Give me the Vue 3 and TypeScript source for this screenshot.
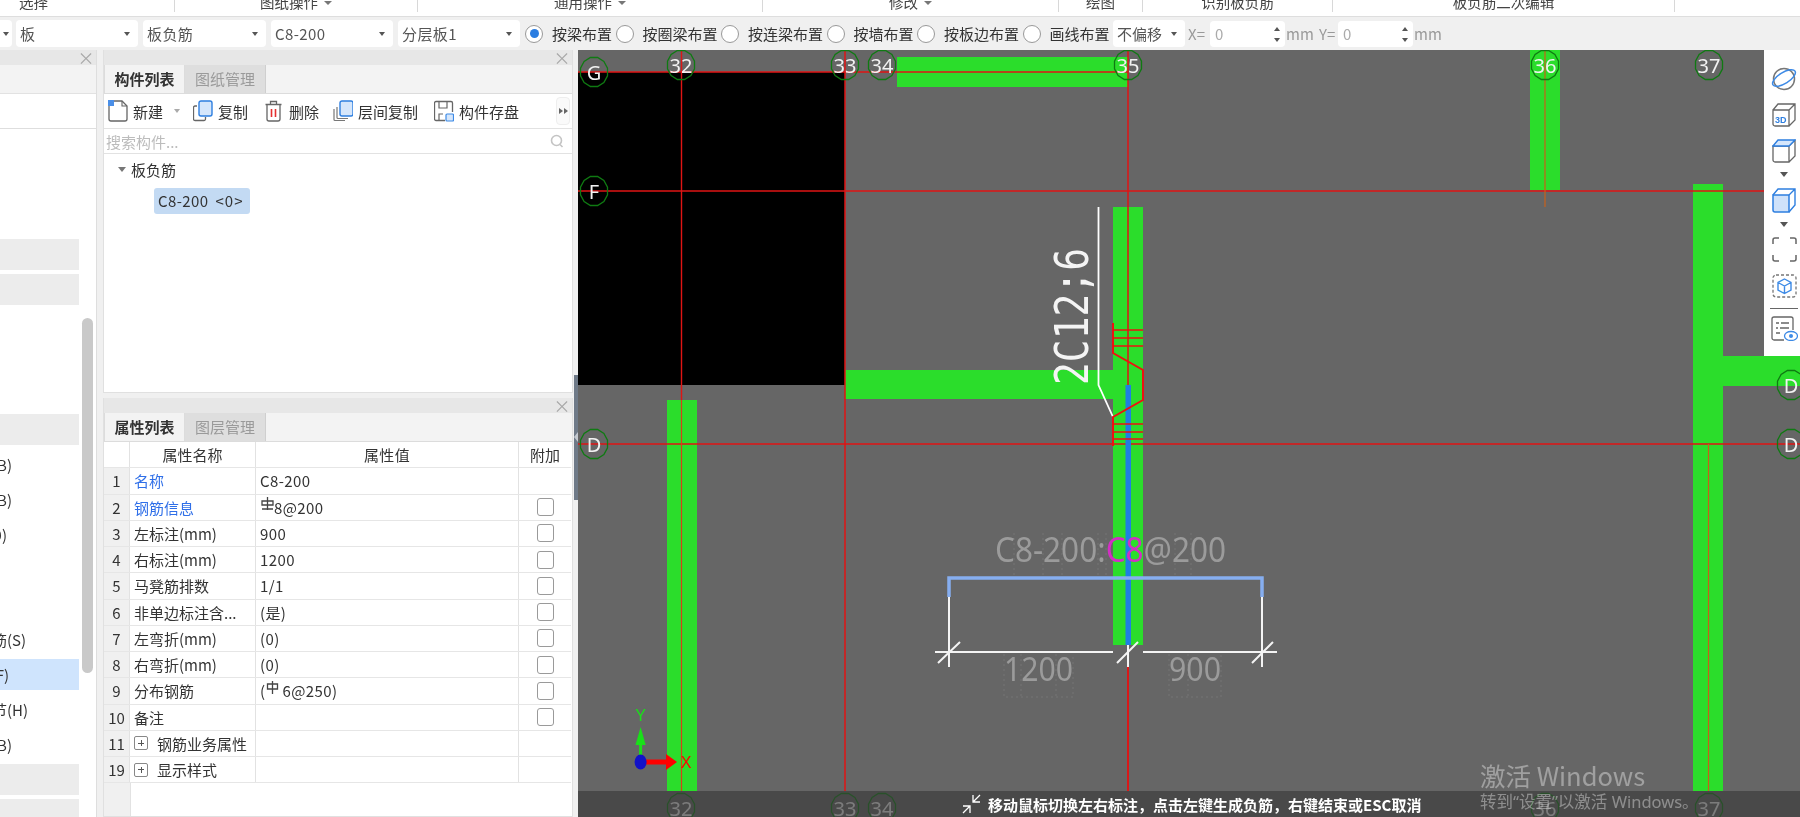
<template>
  <div class="app">
    <div class="ribbon">
      <div v-for="g in ribbonGroups" :key="g.label" class="rib-group" :class="{ first: g.first }" :style="{ width: g.w + 'px' }">
        <span>{{ g.label }}</span><i v-if="g.arrow" class="rib-arrow"></i>
      </div>
    </div>

    <div class="opts">
      <div v-for="c in combos" :key="c.w + c.text" class="combo" :style="{ width: c.w + 'px' }">
        <span>{{ c.text }}</span><i class="caret"></i>
      </div>
      <div v-for="(r, i) in radios" :key="r" class="radio-item">
        <span class="radio" :class="{ on: i === 0 }"></span>
        <span>{{ r }}</span>
      </div>
      <div class="combo offset"><span>不偏移</span><i class="caret"></i></div>
      <span class="dim xlabel">X=</span>
      <div class="spin"><span>0</span><i class="up"></i><i class="down"></i></div>
      <span class="dim mm">mm</span>
      <span class="dim ylabel">Y=</span>
      <div class="spin"><span>0</span><i class="up"></i><i class="down"></i></div>
      <span class="dim mm">mm</span>
    </div>

    <div class="main">
      <aside class="left">
        <div class="pane-head"><span class="close">×</span></div>
        <div class="left-strip"></div>
        <div class="left-tools"></div>
        <div class="left-list">
          <div v-for="(row, i) in leftRows" :key="i" class="left-row" :class="row.kind">
            <span v-if="row.text" class="clip" :style="{ width: row.end + 'px' }">{{ row.text }}</span>
          </div>
        </div>
        <div class="scrollbar"></div>
      </aside>

      <section class="mid">
        <div class="panel top-panel">
          <div class="pane-head"><span class="close">×</span></div>
          <div class="tabs">
            <span class="tab active">构件列表</span>
            <span class="tab">图纸管理</span>
          </div>
          <div class="tools">
            <span class="tool first-tool">
              <svg width="20" height="22" viewBox="0 0 20 22" fill="none">
                <path d="M1 5v14a2 2 0 0 0 2 2h14a2 2 0 0 0 2-2V6l-5-5H6" stroke="#666" stroke-width="1.3" />
                <path d="M14 1v5h5" stroke="#666" stroke-width="1.1" />
                <rect x="0" y="0" width="6" height="6" fill="#4a8fe8" />
              </svg>
              新建<i class="caret tool-caret"></i>
            </span>
            <span class="tool copy-tool">
              <svg width="20" height="22" viewBox="0 0 20 22" fill="none">
                <path d="M4 6H2a1.5 1.5 0 0 0-1.5 1.5V19A1.5 1.5 0 0 0 2 20.5h9a1.5 1.5 0 0 0 1.500-1.5v-2" stroke="#666" stroke-width="1.3" />
                <rect x="6" y="1" width="13" height="15" rx="2" fill="#d5e6fb" stroke="#2e7fe0" stroke-width="1.4" />
              </svg>
              复制
            </span>
            <span class="tool del-tool">
              <svg width="17" height="22" viewBox="0 0 17 22" fill="none">
                <path d="M2 5v14a2 2 0 0 0 2 2h9a2 2 0 0 0 2-2V5M0.5 4.5h16M5.5 4V1.5h6V4" stroke="#666" stroke-width="1.3" />
                <path d="M6.5 9v8M10.5 9v8" stroke="#e53030" stroke-width="1.6" />
              </svg>
              删除
            </span>
            <span class="tool layer-tool">
              <svg width="20" height="22" viewBox="0 0 20 22" fill="none">
                <path d="M1 9v10.5a1 1 0 0 0 1 1h10M4 7v10.5a1 1 0 0 0 1 1h10" stroke="#777" stroke-width="1.2" />
                <rect x="7" y="1" width="13" height="15" rx="2" fill="#d5e6fb" stroke="#2e7fe0" stroke-width="1.4" />
              </svg>
              层间复制
            </span>
            <span class="tool save-tool">
              <svg width="20" height="22" viewBox="0 0 20 22" fill="none">
                <path d="M11 20.5H2A1.5 1.5 0 0 1 .5 19V3A1.5 1.5 0 0 1 2 1.5h15A1.5 1.5 0 0 1 18.500 3v9" stroke="#666" stroke-width="1.3" />
                <path d="M5 2v6h8V2M5 20v-6h4" stroke="#666" stroke-width="1.2" />
                <rect x="12" y="14" width="7.5" height="7" rx="1" fill="#d5e6fb" stroke="#3d8ae6" stroke-width="1.2" />
              </svg>
              构件存盘
            </span>
            <span class="more">
              <i></i><i></i>
            </span>
          </div>
          <div class="search">
            <span>搜索构件...</span>
            <svg width="14" height="14" viewBox="0 0 14 14" fill="none">
              <circle cx="6.5" cy="6.5" r="5" stroke="#c4c4c4" stroke-width="1.6" />
              <path d="M10 10.5l2.5 2.5" stroke="#c4c4c4" stroke-width="1.6" />
            </svg>
          </div>
          <div class="tree">
            <div class="tree-root"><i class="caret"></i>板负筋</div>
            <div class="chip">C8-200<span>&lt;0&gt;</span></div>
          </div>
        </div>

        <div class="panel bottom-panel">
          <div class="pane-head"><span class="close">×</span></div>
          <div class="tabs">
            <span class="tab active">属性列表</span>
            <span class="tab">图层管理</span>
          </div>
          <div class="table">
            <div class="tr head">
              <span class="td idx blank"></span>
              <span class="td name center">属性名称</span>
              <span class="td val center">属性值</span>
              <span class="td add center">附加</span>
            </div>
            <div v-for="p in props" :key="p.no" class="tr">
              <span class="td idx">{{ p.no }}</span>
              <span class="td name" :class="{ link: p.link }">
                <i v-if="p.group" class="plus"></i>{{ p.name }}
              </span>
              <span class="td val">
                <template v-if="p.sym === 'c'">
                  <svg class="sym" width="13" height="14" viewBox="0 0 13 14" fill="none">
                    <path d="M1 4h11v4H1zM6.5 0v13M1 12h11" stroke="#444" stroke-width="1.3" />
                  </svg>8@200
                </template>
                <template v-else-if="p.sym === 'a'">
                  (<svg class="sym wide" width="13" height="14" viewBox="0 0 13 14" fill="none">
                    <path d="M1.5 3h10v5h-10zM6.5 0v13" stroke="#444" stroke-width="1.3" />
                  </svg>6@250)
                </template>
                <template v-else>{{ p.val }}</template>
              </span>
              <span class="td add center"><i v-if="p.check" class="check"></i></span>
            </div>
            <div class="table-rest"></div>
          </div>
        </div>
      </section>

      <div class="splitter"><i></i></div>

      <section class="canvas">
        <svg class="cad" width="1222" height="767" viewBox="578 50 1222 767">
          <rect x="578" y="72" width="267" height="313" fill="#000" />
          <rect v-for="(b, i) in greens" :key="i" :x="b[0]" :y="b[1]" :width="b[2]" :height="b[3]" fill="#2bdd2b" />

          <path d="M578 72H1128M578 191H1800M578 444H1800M845 50V791M1128 50V791" stroke="#e01414" stroke-width="1.5" fill="none" />
          <path d="M681.5 50V400" stroke="#e01414" stroke-width="1.4" />
          <path d="M681.5 400V791" stroke="#d8401a" stroke-width="1.2" />
          <path d="M1545 50V207" stroke="#c8601a" stroke-width="1.2" />
          <path d="M1708.5 444V791" stroke="#c8601a" stroke-width="1.2" />

          <g v-for="n in bubbles" :key="n.label + n.x + n.y" :opacity="n.y > 800 ? 0.5 : 1">
            <polygon :points="bubblePoints(n.x, n.y)" fill="none" stroke="#0f7a12" stroke-width="1.3" />
            <text :x="n.x" :y="n.y + 7.5" class="bubble-text" text-anchor="middle">{{ n.label }}</text>
          </g>

          <path d="M1098.5 207V385L1113 417" stroke="#fff" stroke-width="1.8" fill="none" />
          <text transform="translate(1088 385) rotate(-90)" class="leader" textLength="137" lengthAdjust="spacingAndGlyphs">2C12;6</text>

          <rect x="1125.5" y="385" width="5.5" height="260" fill="#1f7fe2" />
          <path d="M1113 323V353L1143 370V400L1113 417V446" stroke="#ee1111" stroke-width="2" fill="none" />
          <path d="M1113 330H1143M1113 338H1143M1113 346H1143M1113 424H1143M1113 432H1143M1113 439H1143" stroke="#ee1111" stroke-width="1.6" />

          <path d="M949 597V667M1262 597V667M935 652H1113M1143 652H1277M938 663L960 642M1117 663L1138 642M1252 663L1273 642M1128 645V667" stroke="#f4f4f4" stroke-width="2" fill="none" />
          <path d="M949 597V578H1262V597" stroke="#86aef0" stroke-width="3.5" fill="none" />
          <path d="M1128 667V791" stroke="#e01414" stroke-width="1.5" />

          <path d="M1014 533V577M1043 533V577M1062 533V577M1098 533V577M1106 533V577M1175 533V577M1191 533V577M1004 654V697H1073V654M1021 654V697M1056 654V697M1169 654V697H1221V654M1188 654V697" stroke="#7c7c7c" stroke-width="0.7" stroke-dasharray="2 3" fill="none" />

          <text x="995" y="562" class="tag" textLength="231" lengthAdjust="spacingAndGlyphs">C8-200:<tspan fill="#d22fc4">C8</tspan>@200</text>
          <text x="1004" y="681" class="dim-text" textLength="69" lengthAdjust="spacingAndGlyphs">1200</text>
          <text x="1169" y="681" class="dim-text" textLength="52" lengthAdjust="spacingAndGlyphs">900</text>

          <path d="M640.6 762V742" stroke="#19e019" stroke-width="3" />
          <path d="M640.6 727L635.5 745H645.7Z" fill="#19e019" />
          <text x="640.6" y="721" class="axis" fill="#19e019" text-anchor="middle">Y</text>
          <path d="M645 762H668" stroke="#f00" stroke-width="5" />
          <path d="M666 754L677 762L666 770Z" fill="#f00" />
          <text x="686" y="768" class="axis" fill="#f00" text-anchor="middle">X</text>
          <ellipse cx="640.6" cy="762" rx="6" ry="7.5" fill="#1212c8" />
        </svg>

        <div class="view-tools">
          <svg class="vt" width="26" height="24" viewBox="0 0 26 24" fill="none">
            <circle cx="13" cy="12" r="10.5" stroke="#777" stroke-width="1.5" />
            <ellipse cx="13" cy="11" rx="13" ry="5.5" transform="rotate(-32 13 11)" stroke="#3d8ae6" stroke-width="1.5" />
          </svg>
          <svg class="vt" width="24" height="24" viewBox="0 0 24 24" fill="none">
            <path d="M1 7h16v16H3a2 2 0 0 1-2-2zM1 7l5-6h17v16l-6 6M17 7l6-6" stroke="#666" stroke-width="1.3" />
            <text x="3" y="20" class="three-d">3D</text>
          </svg>
          <svg class="vt" width="24" height="24" viewBox="0 0 24 24" fill="none">
            <path d="M1 7h16v16H3a2 2 0 0 1-2-2zM17 23l6-6V1M17 7l6-6" stroke="#666" stroke-width="1.3" />
            <path d="M1 7l5-6h17l-6 6z" fill="#d5e6fb" stroke="#2e7fe0" stroke-width="1.4" />
          </svg>
          <i class="vt-arrow"></i>
          <svg class="vt" width="24" height="25" viewBox="0 0 24 25" fill="none">
            <path d="M1 7h16v17H3a2 2 0 0 1-2-2z" fill="#cfe2fa" stroke="#2e7fe0" stroke-width="1.5" />
            <path d="M1 7l5-6h17v16l-6 7M17 7l6-6" stroke="#2e7fe0" stroke-width="1.4" />
          </svg>
          <i class="vt-arrow"></i>
          <svg class="vt" width="25" height="25" viewBox="0 0 25 25" fill="none">
            <path d="M1 7V3a2 2 0 0 1 2-2h4M18 1h4a2 2 0 0 1 2 2v4M24 18v4a2 2 0 0 1-2 2h-4M7 24H3a2 2 0 0 1-2-2v-4" stroke="#666" stroke-width="1.5" />
          </svg>
          <svg class="vt" width="25" height="24" viewBox="0 0 25 24" fill="none">
            <rect x="1" y="1" width="23" height="22" rx="3" stroke="#777" stroke-width="1.3" stroke-dasharray="3 2" />
            <path d="M12.5 5l6.5 3.5v7.5l-6.5 3.5L6 16V8.5zM6 8.5l6.5 3.5 6.5-3.5M12.5 12v7.5" stroke="#3d8ae6" stroke-width="1.4" />
          </svg>
          <i class="vt-line"></i>
          <svg class="vt last" width="27" height="25" viewBox="0 0 27 25" fill="none">
            <path d="M13 24H3a2 2 0 0 1-2-2V3a2 2 0 0 1 2-2h17a2 2 0 0 1 2 2v11" stroke="#666" stroke-width="1.3" />
            <path d="M5 7h3M10 7h8M5 12h2M9 12h9M5 17h4" stroke="#666" stroke-width="1.3" />
            <ellipse cx="20" cy="20" rx="6.5" ry="4.5" stroke="#3d8ae6" stroke-width="1.3" />
            <circle cx="20" cy="20" r="2" fill="#3d8ae6" />
          </svg>
        </div>

        <div class="hint">
          <svg width="20" height="20" viewBox="0 0 20 20" fill="none">
            <path d="M11 1v7h7M11 8l7-7M1 12h7v7M8 12l-7 7" stroke="#fff" stroke-width="1.3" />
          </svg>
          <span>移动鼠标切换左右标注，点击左键生成负筋，右键结束或ESC取消</span>
        </div>

        <div class="watermark">
          <div class="wm-big">激活 Windows</div>
          <div class="wm-small">转到“设置”以激活 Windows。</div>
        </div>
      </section>
    </div>
  </div>
</template>

<script setup lang="ts">
interface Prop {
  no: number
  name: string
  val?: string
  sym?: 'c' | 'a'
  link?: boolean
  check?: boolean
  group?: boolean
}

const ribbonGroups = [
  { label: '选择', w: 175, first: true, arrow: false },
  { label: '图纸操作', w: 243, arrow: true },
  { label: '通用操作', w: 345, arrow: true },
  { label: '修改', w: 296, arrow: true },
  { label: '绘图', w: 84, arrow: false },
  { label: '识别板负筋', w: 190, arrow: false },
  { label: '板负筋二次编辑', w: 342, arrow: false }
]

const combos = [
  { text: '', w: 12 },
  { text: '板', w: 122 },
  { text: '板负筋', w: 123 },
  { text: 'C8-200', w: 122 },
  { text: '分层板1', w: 122 }
]

const radios = ['按梁布置', '按圈梁布置', '按连梁布置', '按墙布置', '按板边布置', '画线布置']

const leftRows = [
  { kind: 'gray' }, { kind: 'gray' }, { kind: '' }, { kind: '' }, { kind: '' }, { kind: 'gray' },
  { kind: '', text: '筋(B)', end: 12 },
  { kind: '', text: '筋(B)', end: 12 },
  { kind: '', text: '(9)', end: 7 },
  { kind: '' }, { kind: '' },
  { kind: '', text: '板筋(S)', end: 26 },
  { kind: 'sel', text: '(F)', end: 9 },
  { kind: '', text: '筋节(H)', end: 28 },
  { kind: '', text: '筋(B)', end: 12 },
  { kind: 'gray' }, { kind: 'gray' }
]

const props: Prop[] = [
  { no: 1, name: '名称', val: 'C8-200', link: true },
  { no: 2, name: '钢筋信息', sym: 'c', link: true, check: true },
  { no: 3, name: '左标注(mm)', val: '900', check: true },
  { no: 4, name: '右标注(mm)', val: '1200', check: true },
  { no: 5, name: '马凳筋排数', val: '1/1', check: true },
  { no: 6, name: '非单边标注含...', val: '(是)', check: true },
  { no: 7, name: '左弯折(mm)', val: '(0)', check: true },
  { no: 8, name: '右弯折(mm)', val: '(0)', check: true },
  { no: 9, name: '分布钢筋', sym: 'a', check: true },
  { no: 10, name: '备注', val: '', check: true },
  { no: 11, name: '钢筋业务属性', group: true },
  { no: 19, name: '显示样式', group: true }
]

// x, y, width, height in page coordinates
const greens = [
  [897, 57, 231, 30],
  [1530, 50, 30, 140],
  [845, 370, 268, 29],
  [1113, 207, 30, 438],
  [667, 400, 30, 391],
  [1693, 184, 30, 607],
  [1723, 356, 77, 30]
]

const bubbles = [
  { label: 'G', x: 594, y: 72 },
  { label: 'F', x: 594, y: 191 },
  { label: 'D', x: 594, y: 444 },
  { label: '32', x: 681, y: 65 },
  { label: '33', x: 845, y: 65 },
  { label: '34', x: 882, y: 65 },
  { label: '35', x: 1128, y: 65 },
  { label: '36', x: 1545, y: 65 },
  { label: '37', x: 1709, y: 65 },
  { label: 'D', x: 1791, y: 385 },
  { label: 'D', x: 1791, y: 444 },
  { label: '32', x: 681, y: 808 },
  { label: '33', x: 845, y: 808 },
  { label: '34', x: 882, y: 808 },
  { label: '36', x: 1545, y: 808 },
  { label: '37', x: 1709, y: 808 }
]

function bubblePoints(cx: number, cy: number): string {
  const pts: string[] = []
  for (let i = 0; i < 12; i++) {
    const a = (Math.PI / 6) * i + Math.PI / 12
    pts.push(`${(cx + 14 * Math.cos(a)).toFixed(1)},${(cy + 15 * Math.sin(a)).toFixed(1)}`)
  }
  return pts.join(' ')
}
</script>

<style>
html, body {
  margin: 0;
  overflow: hidden;
}
</style>

<style scoped>
.app {
  width: 1800px;
  height: 817px;
  display: flex;
  flex-direction: column;
  overflow: hidden;
  background: #f0f0f0;
  color: #333;
  font-family: "Noto Sans CJK SC", "Noto Sans", sans-serif;
  font-size: 15px;
  filter: blur(0.3px);
}
i { display: block; font-style: normal; }

.ribbon {
  height: 17px;
  flex: none;
  display: flex;
  background: #fff;
  border-bottom: 1px solid #dedede;
  box-sizing: border-box;
  overflow: hidden;
}
.rib-group {
  height: 12px;
  flex: none;
  box-sizing: border-box;
  border-right: 1px solid #d8d8d8;
  display: flex;
  justify-content: center;
  align-items: center;
  gap: 6px;
  line-height: 16px;
  font-size: 14.5px;
  color: #444;
}
.rib-group span { position: relative; top: -4px; }
.rib-group.first { justify-content: flex-start; padding-left: 19px; }
.rib-arrow {
  width: 0;
  height: 0;
  border: 4px solid transparent;
  border-top: 4px solid #777;
  margin-top: -2px;
}

.opts {
  height: 33px;
  flex: none;
  display: flex;
  align-items: center;
}
.combo {
  height: 27px;
  margin-right: 5px;
  box-sizing: border-box;
  background: #fff;
  border-radius: 4px;
  display: flex;
  align-items: center;
  justify-content: space-between;
  padding: 0 8px 0 4px;
  flex: none;
  color: #555;
  letter-spacing: 0.4px;
}
.combo:first-child { padding: 0; margin-right: 4px; border-radius: 0 4px 4px 0; justify-content: center; }
.combo.offset { width: 72px; margin: 0 3px 0 0; letter-spacing: 0; }
.caret {
  width: 0;
  height: 0;
  border: 3.5px solid transparent;
  border-top: 4px solid #555;
  border-bottom: 0;
}
.radio-item {
  display: flex;
  align-items: center;
  margin-right: 3.5px;
  white-space: nowrap;
}
.radio {
  width: 18px;
  height: 18px;
  box-sizing: border-box;
  border: 1px solid #999;
  border-radius: 50%;
  margin-right: 9px;
  background: #fff;
  display: flex;
  align-items: center;
  justify-content: center;
}
.radio.on::after {
  content: "";
  width: 9px;
  height: 9px;
  border-radius: 50%;
  background: #2a7de1;
}
.dim { color: #999; }
.xlabel { width: 22px; }
.ylabel { width: 19px; margin-left: 6px; }
.mm { margin-left: 1px; width: 27px; }
.spin {
  position: relative;
  width: 75px;
  height: 26px;
  box-sizing: border-box;
  background: #fff;
  border-radius: 4px;
  padding-left: 5px;
  line-height: 26px;
  color: #aaa;
}
.spin .up, .spin .down {
  position: absolute;
  right: 5px;
  width: 0;
  height: 0;
  border: 3.5px solid transparent;
}
.spin .up { top: 6px; border-bottom: 4px solid #555; border-top: 0; }
.spin .down { bottom: 5px; border-top: 4px solid #555; border-bottom: 0; }

.main {
  flex: 1;
  display: flex;
  min-height: 0;
}
.left {
  position: relative;
  width: 97px;
  flex: none;
  display: flex;
  flex-direction: column;
  background: #fff;
  border-right: 1px solid #dedede;
  box-sizing: border-box;
  margin-right: 6px;
}
.pane-head {
  height: 15px;
  flex: none;
  background: #e7e7e7;
  display: flex;
  justify-content: flex-end;
  align-items: center;
}
.close {
  width: 20px;
  text-align: center;
  color: #a8a8a8;
  font-size: 17px;
  line-height: 15px;
}
.left-strip {
  height: 28px;
  flex: none;
  background: #f3f3f3;
  border-bottom: 1px solid #e2e2e2;
}
.left-tools {
  height: 34px;
  flex: none;
  border-bottom: 1px solid #dedede;
}
.left-list {
  padding-top: 110px;
  width: 79px;
  display: flex;
  flex-direction: column;
  gap: 4px;
}
.left-row {
  height: 31px;
  flex: none;
  display: flex;
  align-items: center;
  overflow: hidden;
}
.left-row.gray { background: #ececec; }
.left-row.sel { background: #cfe4fd; }
.clip {
  display: flex;
  justify-content: flex-end;
  white-space: nowrap;
  overflow: hidden;
}
.scrollbar {
  position: absolute;
  left: 82px;
  top: 268px;
  width: 11px;
  height: 355px;
  background: #c9c9c9;
  border-radius: 6px;
}

.mid {
  width: 470px;
  flex: none;
  display: flex;
  flex-direction: column;
  gap: 5px;
}
.panel {
  display: flex;
  flex-direction: column;
  background: #fff;
  box-sizing: border-box;
  border: 1px solid #e0e0e0;
  border-top: 0;
}
.top-panel { height: 343px; }
.bottom-panel { height: 419px; }
.tabs {
  height: 28px;
  flex: none;
  display: flex;
  background: #f3f3f3;
  border-bottom: 1px solid #dcdcdc;
}
.tab {
  width: 81px;
  box-sizing: border-box;
  text-align: center;
  line-height: 28px;
  background: #dedede;
  color: #9a9a9a;
  border-right: 1px solid #cfcfcf;
}
.tab.active {
  background: #f3f3f3;
  color: #333;
  font-weight: 700;
  border-left: 1px solid #dcdcdc;
  border-right: 1px solid #dcdcdc;
}
.tools {
  height: 34px;
  flex: none;
  display: flex;
  align-items: center;
  border-bottom: 1px solid #e2e2e2;
  padding-left: 4px;
}
.tool {
  display: flex;
  align-items: center;
  gap: 5px;
  white-space: nowrap;
}
.copy-tool { margin-left: 13px; }
.del-tool { margin-left: 17px; gap: 7px; }
.layer-tool { margin-left: 14px; }
.save-tool { margin-left: 16px; }
.tool-caret { margin-left: 6px; border-top-color: #aaa; }
.more {
  margin-left: auto;
  margin-right: 2px;
  width: 12px;
  height: 26px;
  border-radius: 4px;
  background: #fafafa;
  border: 1px solid #eee;
  display: flex;
  align-items: center;
  justify-content: center;
  gap: 1px;
}
.more i {
  width: 0;
  height: 0;
  border: 3px solid transparent;
  border-left: 4px solid #666;
  border-right: 0;
}
.search {
  height: 24px;
  flex: none;
  display: flex;
  align-items: center;
  justify-content: space-between;
  padding: 0 8px 0 2px;
  color: #bcbcbc;
  border-bottom: 1px solid #e2e2e2;
}
.tree { padding: 5px 0 0 14px; flex: 1; }
.tree-root {
  display: flex;
  align-items: center;
  gap: 5px;
  height: 20px;
}
.tree-root .caret { border-top-color: #777; border-left-width: 4px; border-right-width: 4px; border-top-width: 5px; }
.chip {
  margin: 9px 0 0 36px;
  width: 96px;
  height: 26px;
  box-sizing: border-box;
  padding-left: 4px;
  line-height: 26px;
  background: #c3daf3;
  border-radius: 3px;
  white-space: pre;
  letter-spacing: 0.4px;
  display: flex;
}
.chip span { margin-left: 7px; letter-spacing: 1px; }

.table {
  flex: 1;
  display: flex;
  flex-direction: column;
  min-height: 0;
}
.tr {
  height: 26.25px;
  flex: none;
  display: flex;
  width: 467px;
  box-sizing: border-box;
  border-bottom: 1.5px solid #e6e6e6;
}
.td {
  box-sizing: border-box;
  border-right: 1px solid #e2e2e2;
  display: flex;
  align-items: center;
  white-space: nowrap;
  padding-left: 4px;
}
.td.center { justify-content: center; padding-left: 0; }
.idx {
  width: 26px;
  flex: none;
  padding-left: 0;
  justify-content: center;
  background: #f0f0f0;
}
.idx.blank { background: #fff; }
.name { width: 126px; flex: none; }
.name.link { color: #2f6fe8; }
.val { flex: 1; padding-left: 4px; letter-spacing: 0.4px; }
.add { width: 52px; flex: none; border-right: 0; }
.sym { margin: -6px 0 0 1px; }
.sym.wide { margin-right: 3px; }
.check {
  width: 17px;
  height: 18px;
  box-sizing: border-box;
  border: 1.5px solid #9a9a9a;
  border-radius: 3px;
  background: #fff;
}
.plus {
  position: relative;
  width: 14px;
  height: 14px;
  margin-right: 9px;
  box-sizing: border-box;
  border: 1px solid #888;
  border-radius: 2px;
}
.plus::before, .plus::after {
  content: "";
  position: absolute;
  background: #555;
}
.plus::before { left: 3px; right: 3px; top: 5.5px; height: 1px; }
.plus::after { top: 3px; bottom: 3px; left: 5.5px; width: 1px; }
.table-rest {
  flex: 1;
  width: 26px;
  background: #f0f0f0;
  border-right: 1px solid #e2e2e2;
}

.splitter {
  width: 5px;
  flex: none;
  position: relative;
}
.splitter::before {
  content: "";
  position: absolute;
  left: 1px;
  right: 0;
  top: 325px;
  height: 125px;
  background: #6f7a88;
}
.splitter i {
  position: absolute;
  left: 1px;
  top: 382px;
  width: 0;
  height: 0;
  border: 5px solid transparent;
  border-right: 4px solid #c4c9d0;
  border-left: 0;
}

.canvas {
  flex: 1;
  position: relative;
  background: #666;
  overflow: hidden;
}
.cad { display: block; }
.bubble-text {
  fill: #f2f2f2;
  font-family: "Noto Sans", sans-serif;
  font-size: 20px;
}
.leader {
  fill: #f4f4f4;
  font-family: "DejaVu Sans Mono", monospace;
  font-size: 46px;
}
.tag {
  fill: #9b9b9b;
  font-family: "Noto Sans", sans-serif;
  font-size: 35px;
}
.dim-text {
  fill: #9b9b9b;
  font-family: "Noto Sans", sans-serif;
  font-size: 33px;
}
.axis {
  font-family: "Liberation Sans", sans-serif;
  font-size: 16px;
}
.three-d {
  fill: #2e7fe0;
  font-family: "Liberation Sans", sans-serif;
  font-weight: 700;
  font-size: 9px;
}

.view-tools {
  position: absolute;
  top: 0;
  right: 0;
  width: 36px;
  height: 306px;
  box-sizing: border-box;
  padding-top: 17px;
  background: #fff;
  display: flex;
  flex-direction: column;
  align-items: center;
}
.vt { margin: 0 0 12px 4px; flex: none; display: block; }
.vt-arrow {
  width: 0;
  height: 0;
  margin: -3px 0 10.5px 4px;
  border: 4px solid transparent;
  border-top: 5px solid #555;
  border-bottom: 0;
}
.vt-line {
  width: 28px;
  height: 1px;
  margin: -2px 0 7px 4px;
  background: #666;
}
.vt.last { margin-bottom: 0; }

.hint {
  position: absolute;
  left: 0;
  right: 0;
  bottom: 0;
  height: 26px;
  padding-left: 384px;
  display: flex;
  align-items: center;
  gap: 6px;
  background: rgba(0, 0, 0, 0.28);
  color: #fff;
  font-weight: 700;
  font-size: 15px;
  white-space: nowrap;
}
.watermark {
  position: absolute;
  left: 902px;
  top: 710px;
  color: rgba(255, 255, 255, 0.38);
}
.wm-big { font-size: 25.5px; line-height: 30px; }
.wm-small {
  font-family: "Noto Sans", "Noto Sans CJK SC", sans-serif;
  font-size: 16.5px;
  line-height: 22px;
  margin-top: 1px;
}
</style>
